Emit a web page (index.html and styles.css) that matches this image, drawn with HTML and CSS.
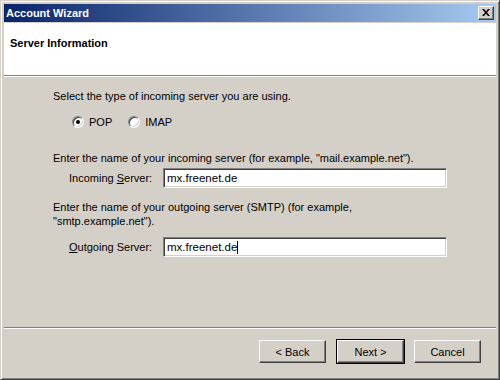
FILE: index.html
```html
<!DOCTYPE html>
<html lang="en">

<head>
    <meta charset="utf-8">
    <title>Account Wizard</title>
    <meta name="viewport" content="width=device-width, initial-scale=1">
    <link rel="stylesheet" href="styles.css">
</head>

<body>
    <div class="window">
        <div class="title-bar">
            <span class="title">Account Wizard</span>
            <button class="close-button" aria-label="Close">
                <svg width="8" height="7" viewBox="0 0 8 7">
                    <path d="M0 0h2l2 2.2L6 0h2L5 3.5 8 7H6L4 4.8 2 7H0l3-3.5z" fill="#000"/>
                </svg>
            </button>
        </div>

        <div class="page-header">
            <h1>Server Information</h1>
        </div>
        <div class="etched"></div>

        <div class="main-content">
            <p class="line">Select the type of incoming server you are using.</p>

            <div class="radio-group">
                <label class="radio"><span class="radio-dot checked"></span>POP</label>
                <label class="radio"><span class="radio-dot"></span>IMAP</label>
            </div>

            <p class="line prompt">Enter the name of your incoming server (for example, "mail.example.net").</p>
            <div class="form-group">
                <label class="field-label">Incoming <u>S</u>erver:</label>
                <div class="text-box">mx.freenet.de</div>
            </div>

            <p class="line prompt-two">Enter the name of your outgoing server (SMTP) (for example,<br>"smtp.example.net").</p>
            <div class="form-group second">
                <label class="field-label"><u>O</u>utgoing Server:</label>
                <div class="text-box">mx.freenet.de<span class="caret"></span></div>
            </div>
        </div>

        <div class="footer">
            <div class="etched"></div>
            <div class="buttons">
                <button class="push back">&lt; Back</button>
                <button class="push default">Next &gt;</button>
                <button class="push">Cancel</button>
            </div>
        </div>
    </div>
</body>

</html>
```

FILE: styles.css
```css
body {
    margin: 0;
    padding: 0;
    font-family: 'Liberation Sans', Arial, sans-serif;
    font-size: 11px;
    color: #000;
    background-color: #d4d0c8;
}

.window {
    width: 500px;
    height: 380px;
    box-sizing: border-box;
    background-color: #d4d0c8;
    border: 1px solid;
    border-color: #d4d0c8 #404040 #404040 #d4d0c8;
    box-shadow: inset 1px 1px #fff, inset -1px -1px #808080;
    padding: 3px;
    display: flex;
    flex-direction: column;
}

.title-bar {
    height: 18px;
    margin-bottom: 1px;
    padding: 0 2px;
    display: flex;
    align-items: center;
    justify-content: space-between;
    background: linear-gradient(to right, #0a246a, #a6caf0);
}

.title {
    color: #fff;
    font-weight: bold;
    font-size: 11px;
}

.close-button {
    width: 16px;
    height: 14px;
    padding: 0;
    background-color: #d4d0c8;
    border: 1px solid;
    border-color: #fff #404040 #404040 #fff;
    box-shadow: inset -1px -1px #808080;
    display: flex;
    align-items: center;
    justify-content: center;
}

.close-button svg {
    display: block;
    margin-top: -1px;
}

.page-header {
    height: 52px;
    background-color: #fff;
    box-sizing: border-box;
    padding: 14px 0 0 6px;
}

h1 {
    margin: 0;
    font-size: 11px;
    font-weight: bold;
    line-height: 13px;
}

.etched {
    height: 0;
    border-top: 1px solid #808080;
    border-bottom: 1px solid #fff;
}

.main-content {
    flex: 1;
    padding: 13px 0 0 49px;
}

.line {
    margin: 0;
    line-height: 13px;
}

.radio-group {
    margin-top: 12px;
    padding-left: 19px;
    display: flex;
    align-items: center;
    height: 13px;
}

.radio {
    display: flex;
    align-items: center;
    margin-right: 16px;
}

.radio-dot {
    position: relative;
    width: 12px;
    height: 12px;
    box-sizing: border-box;
    margin-right: 5px;
    border-radius: 50%;
    border: 1px solid;
    border-color: #808080 #fff #fff #808080;
    box-shadow: inset 1px 1px #404040, inset -1px -1px #d4d0c8;
    background-color: #fff;
}

.radio-dot.checked::after {
    content: "";
    position: absolute;
    left: 3px;
    top: 3px;
    width: 4px;
    height: 4px;
    border-radius: 50%;
    background-color: #000;
}

.prompt {
    margin-top: 24px;
}

.prompt-two {
    margin-top: 12px;
    line-height: 14px;
}

.form-group {
    margin-top: 3px;
    padding-left: 16px;
    display: flex;
    align-items: center;
}

.form-group.second {
    margin-top: 9px;
}

.field-label {
    width: 94px;
}

.text-box {
    width: 284px;
    height: 20px;
    box-sizing: border-box;
    padding: 0 3px;
    background-color: #fff;
    border: 1px solid;
    border-color: #808080 #fff #fff #808080;
    box-shadow: inset 1px 1px #404040, inset -1px -1px #d4d0c8;
    display: flex;
    align-items: center;
    font-size: 11.5px;
}

.caret {
    display: inline-block;
    width: 1px;
    height: 13px;
    background-color: #000;
}

.buttons {
    padding: 11px 15px 13px 0;
    display: flex;
    justify-content: flex-end;
    gap: 10px;
}

.push {
    width: 67px;
    height: 23px;
    padding: 0;
    font-family: 'Liberation Sans', Arial, sans-serif;
    font-size: 11px;
    color: #000;
    background-color: #d4d0c8;
    border: 1px solid;
    border-color: #fff #404040 #404040 #fff;
    box-shadow: inset -1px -1px #808080;
}

.push.back {
    margin-right: 1px;
}

.push.default {
    outline: 1px solid #000;
    outline-offset: 0;
    border-color: #fff #404040 #404040 #fff;
}
```
